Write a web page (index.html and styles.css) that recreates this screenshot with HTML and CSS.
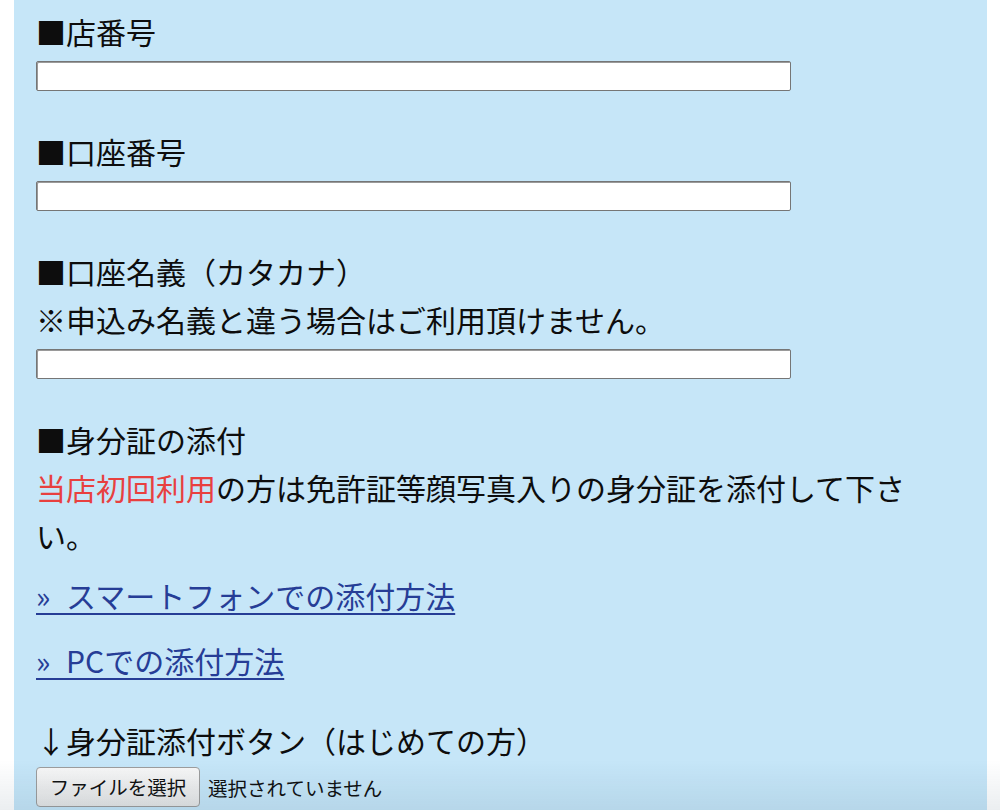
FILE: index.html
```html
<!DOCTYPE html>
<html lang="ja">
<head>
    <meta charset="utf-8">
    <title>振込先口座の登録</title>
    <link rel="stylesheet" href="styles.css">
</head>
<body>
    <div class="panel">
        <div class="form-body">
            <div class="field">
                <p class="label">■店番号</p>
                <input type="text" class="text-input" name="branch">
            </div>

            <div class="field">
                <p class="label">■口座番号</p>
                <input type="text" class="text-input" name="account">
            </div>

            <div class="field">
                <p class="label">■口座名義（カタカナ）<br>※申込み名義と違う場合はご利用頂けません。</p>
                <input type="text" class="text-input" name="holder">
            </div>

            <div class="field">
                <p class="label">■身分証の添付<br><span class="red">当店初回利用</span>の方は免許証等顔写真入りの身分証を添付して下さい。</p>
                <p class="link-line first"><a href="#" class="guide-link">» スマートフォンでの添付方法</a></p>
                <p class="link-line"><a href="#" class="guide-link">» PCでの添付方法</a></p>
            </div>

            <div class="upload">
                <p class="label">↓身分証添付ボタン（はじめての方）</p>
                <div class="file-row">
                    <label class="file-button" for="id-file">ファイルを選択</label>
                    <input id="id-file" type="file" name="id_image" class="file-hidden">
                    <span class="file-status">選択されていません</span>
                </div>
            </div>
        </div>
    </div>
    <div class="bottom-shade"></div>
</body>
</html>
```

FILE: styles.css
```css
body {
    margin: 0;
    padding: 0;
    background-color: #ffffff;
    color: #111111;
    font-family: "Noto Sans CJK JP", "Liberation Sans", sans-serif;
    height: 810px;
    overflow: hidden;
}

.panel {
    margin-left: 14px;
    width: 973px;
    min-height: 810px;
    background-color: #c6e6f8;
    box-sizing: border-box;
    padding: 7px 0 0 22px;
}

.form-body {
    width: 890px;
}

.field {
    margin-bottom: 36px;
}

.label {
    margin: 0;
    font-size: 30px;
    line-height: 48px;
    color: #0d0d0d;
}

.red {
    color: #e8403f;
}

.text-input {
    display: block;
    margin-top: 6px;
    width: 755px;
    height: 30px;
    box-sizing: border-box;
    border: 1px solid #767676;
    border-radius: 2px;
    background-color: #ffffff;
    box-shadow: inset 1px 1px 0 #9a9a9a;
}

.link-line {
    margin: 17px 0 0;
    font-size: 30px;
    line-height: 48px;
}

.link-line.first {
    margin-top: 12px;
}

.guide-link {
    color: #263d96;
    text-decoration: underline;
    text-underline-offset: 5px;
    text-decoration-thickness: 2px;
    word-spacing: 9px;
}

.upload {
    margin-top: -4px;
}

.file-row {
    display: flex;
    align-items: center;
    margin-top: 3px;
}

.file-button {
    display: inline-block;
    height: 40px;
    width: 164px;
    box-sizing: border-box;
    border: 1px solid #9d9d9d;
    border-radius: 4px;
    background: linear-gradient(#f7f7f7, #e6e6e6);
    font-size: 19.5px;
    line-height: 38px;
    text-align: center;
    color: #111111;
}

.file-hidden {
    display: none;
}

.file-status {
    margin-left: 8px;
    font-size: 19.5px;
    color: #111111;
}

/* screenshot shadow at the bottom edge */
.bottom-shade {
    position: fixed;
    left: 0;
    right: 0;
    bottom: 0;
    height: 50px;
    background: linear-gradient(rgba(0, 40, 70, 0), rgba(0, 40, 70, 0.08));
    pointer-events: none;
}
```
